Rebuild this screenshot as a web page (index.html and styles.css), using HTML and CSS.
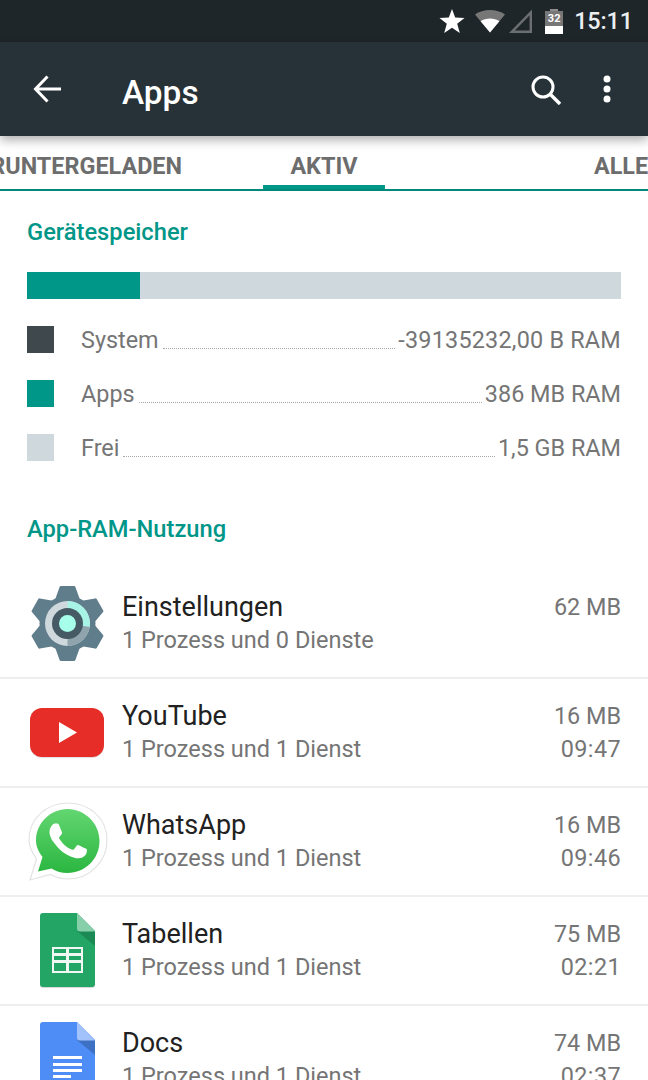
FILE: index.html
```html
<!DOCTYPE html>
<html lang="de">
<head>
<meta charset="utf-8">
<title>Apps</title>
<link rel="stylesheet" href="styles.css">
</head>
<body>
<div class="screen">
  <div class="status">
    <svg class="st-star" width="26" height="24" viewBox="0 0 26 24"><polygon fill="#fff" points="13,0 16.2,8.6 25.5,9 18.2,14.8 20.8,24 13,18.8 5.2,24 7.8,14.8 0.5,9 9.8,8.6"/></svg>
    <svg class="st-wifi" width="30" height="23" viewBox="0 0 30 23"><path fill="#777" d="M15 22.5 0 4.5C4 1.6 9.3 0 15 0s11 1.6 15 4.5z"/><path fill="#fff" d="M15 22.5 5.6 11.2C8.2 9.4 11.5 8.4 15 8.4s6.8 1 9.4 2.8z"/></svg>
    <svg class="st-sig" width="24" height="24" viewBox="0 0 24 24"><path fill="none" stroke="#6b6f72" stroke-width="2.4" d="M21.8 3.4V22.8H2.8z"/></svg>
    <div class="battery"><span class="bat-cap"></span><span class="bat-top">32</span><span class="bat-low"></span></div>
    <span class="clock">15:11</span>
  </div>
  <header class="toolbar">
    <svg class="tb-back" width="28" height="28" viewBox="0 0 28 28"><path fill="none" stroke="#fff" stroke-width="3" d="M28 14H3M14.500 1.500 2.500 14l12 12.500"/></svg>
    <h1 class="tb-title">Apps</h1>
    <svg class="tb-search" width="30" height="30" viewBox="0 0 30 30"><circle cx="12" cy="12" r="10" fill="none" stroke="#fff" stroke-width="3"/><path stroke="#fff" stroke-width="3.400" d="M19 19l10 10"/></svg>
    <svg class="tb-more" width="8" height="28" viewBox="0 0 8 28"><circle cx="4" cy="4" r="3.500" fill="#fff"/><circle cx="4" cy="14" r="3.500" fill="#fff"/><circle cx="4" cy="24" r="3.500" fill="#fff"/></svg>
  </header>
  <nav class="tabs">
    <div class="tab tab-left"><span>HERUNTERGELADEN</span></div>
    <div class="tab tab-active"><span>AKTIV</span></div>
    <div class="tab tab-right"><span>ALLE</span></div>
  </nav>
  <main class="content">
    <section class="storage">
      <h2 class="heading">Gerätespeicher</h2>
      <div class="bar"><div class="bar-fill"></div></div>
      <ul class="legend">
        <li class="leg-row"><span class="swatch sw-system"></span><span class="leg-label">System</span><span class="leader"></span><span class="leg-val leg-val-digits">-39135232,00 B RAM</span></li>
        <li class="leg-row"><span class="swatch sw-apps"></span><span class="leg-label">Apps</span><span class="leader"></span><span class="leg-val">386 MB RAM</span></li>
        <li class="leg-row"><span class="swatch sw-free"></span><span class="leg-label">Frei</span><span class="leader"></span><span class="leg-val">1,5 GB RAM</span></li>
      </ul>
    </section>
    <h2 class="heading heading-apps">App-RAM-Nutzung</h2>
    <ul class="apps">
      <li class="app">
        <svg class="app-icon" width="81" height="81" viewBox="0 0 81 81">
          <g transform="translate(40.500 40.500)">
            <circle r="28" fill="#607d8b"/>
            <path fill="#607d8b" stroke="#607d8b" stroke-width="3" stroke-linejoin="round" d="M-6.500-36H6.500L11.500 -22V22L6.500 36H-6.500L-11.500 22V-22z"/>
            <path fill="#607d8b" stroke="#607d8b" stroke-width="3" stroke-linejoin="round" transform="rotate(60)" d="M-6.500-36H6.500L11.500 -22V22L6.500 36H-6.500L-11.500 22V-22z"/>
            <path fill="#607d8b" stroke="#607d8b" stroke-width="3" stroke-linejoin="round" transform="rotate(120)" d="M-6.500-36H6.500L11.500 -22V22L6.500 36H-6.500L-11.500 22V-22z"/>
            <circle r="22.500" fill="#cfd8dc"/>
            <path fill="#a7f3e6" d="M0 0V-22.500A22.500 22.500 0 0 1 22.200 3.500z"/>
            <path fill="#90a4ae" d="M0 0 22.200 3.500A22.500 22.500 0 0 1 0 22.500z"/>
            <circle r="15.500" fill="#455a64"/>
            <circle r="8.500" fill="#a7ffeb"/>
          </g>
        </svg>
        <div class="app-text"><div class="app-name">Einstellungen</div><div class="app-sub">1 Prozess und 0 Dienste</div></div>
        <div class="app-meta"><div>62 MB</div></div>
      </li>
      <li class="app">
        <svg class="app-icon" width="81" height="81" viewBox="0 0 81 81">
          <rect x="3" y="17" width="74" height="49" rx="12" fill="#e0e0e0"/>
          <rect x="3" y="16" width="74" height="49" rx="12" fill="#e62d27"/>
          <polygon fill="#fff" points="32,30 50,40.500 32,51"/>
        </svg>
        <div class="app-text"><div class="app-name">YouTube</div><div class="app-sub">1 Prozess und 1 Dienst</div></div>
        <div class="app-meta"><div>16 MB</div><div class="app-time">09:47</div></div>
      </li>
      <li class="app">
        <svg class="app-icon" width="81" height="81" viewBox="0 0 81 81">
          <defs><linearGradient id="wa" x1="0" y1="0" x2="0" y2="1"><stop offset="0" stop-color="#63d671"/><stop offset="1" stop-color="#2bb640"/></linearGradient></defs>
          <path fill="#fff" stroke="#e3e3e3" stroke-width="1.200" d="M3 79 9.500 58C4 50 2 44 2 39 2 18 19 2 41 2s39 16 39 37-17 39-39 39c-7 0-12-1.500-17.500-4.500z"/>
          <path fill="url(#wa)" d="M11 70.500 15.500 56C11 50 9 45 9 39.500 9 22 23.500 8 40.500 8S72.500 22 72.500 40 58 72 40.500 72c-6 0-11-1.500-16-4.500z"/>
          <path fill="#fff" transform="translate(3.900 2.600) scale(3.100)" d="M17.472 14.382c-.297-.149-1.758-.867-2.03-.967-.273-.099-.471-.148-.67.15-.197.297-.767.966-.94 1.164-.173.199-.347.223-.644.075-.297-.15-1.255-.463-2.39-1.475-.883-.788-1.48-1.761-1.653-2.059-.173-.297-.018-.458.13-.606.134-.133.298-.347.446-.52.149-.174.198-.298.298-.497.099-.198.05-.371-.025-.52-.075-.149-.669-1.612-.916-2.207-.242-.579-.487-.5-.669-.51-.173-.008-.371-.01-.57-.01-.198 0-.52.074-.792.372-.272.297-1.04 1.016-1.04 2.479 0 1.462 1.065 2.875 1.213 3.074.149.198 2.096 3.2 5.077 4.487.709.306 1.262.489 1.694.625.712.227 1.36.195 1.871.118.571-.085 1.758-.719 2.006-1.413.248-.694.248-1.289.173-1.413-.074-.124-.272-.198-.57-.347z"/>
        </svg>
        <div class="app-text"><div class="app-name">WhatsApp</div><div class="app-sub">1 Prozess und 1 Dienst</div></div>
        <div class="app-meta"><div>16 MB</div><div class="app-time">09:46</div></div>
      </li>
      <li class="app">
        <svg class="app-icon" width="81" height="81" viewBox="0 0 81 81">
          <path fill="#d8d8d8" d="M16 4.500H50L68 22.500V75A3 3 0 0 1 65 78H16a3 3 0 0 1-3-3V7.500a3 3 0 0 1 3-3z"/>
          <path fill="#23a566" d="M16 3H50L68 21V74A3 3 0 0 1 65 77H16a3 3 0 0 1-3-3V6a3 3 0 0 1 3-3z"/>
          <path fill="#1c8a55" d="M50 21H68V36z"/>
          <path fill="#87cfa9" d="M50 3 68 21.500H53a3 3 0 0 1-3-3z"/>
          <path fill="#f1f8f4" fill-rule="evenodd" d="M25 37H56V63H25zM27 39V43H39V39zM42 39V43H54V39zM27 46V50H39V46zM42 46V50H54V46zM27 53V61H39V53zM42 53V61H54V53z"/>
        </svg>
        <div class="app-text"><div class="app-name">Tabellen</div><div class="app-sub">1 Prozess und 1 Dienst</div></div>
        <div class="app-meta"><div>75 MB</div><div class="app-time">02:21</div></div>
      </li>
      <li class="app">
        <svg class="app-icon" width="81" height="81" viewBox="0 0 81 81">
          <path fill="#4e8df5" d="M16 3H50L68 21V74A3 3 0 0 1 65 77H16a3 3 0 0 1-3-3V6a3 3 0 0 1 3-3z"/>
          <path fill="#3e71c4" d="M50 21H68V36z"/>
          <path fill="#a1c2fa" d="M50 3 68 21.500H53a3 3 0 0 1-3-3z"/>
          <path fill="#fff" d="M26 37H55V40H26zM26 44H55V47H26zM26 50H55V53H26zM26 56H44V59H26z"/>
        </svg>
        <div class="app-text"><div class="app-name">Docs</div><div class="app-sub">1 Prozess und 1 Dienst</div></div>
        <div class="app-meta"><div>74 MB</div><div class="app-time">02:37</div></div>
      </li>
    </ul>
  </main>
</div>
</body>
</html>
```
FILE: styles.css
```css
* { box-sizing: border-box; }
html, body { margin: 0; padding: 0; }
body { font-family: Roboto, "Liberation Sans", sans-serif; background: #fff; }
.screen { width: 648px; height: 1080px; overflow: hidden; display: flex; flex-direction: column; }

.status { height: 42px; flex: none; background: #1f262a; display: flex; align-items: center; justify-content: flex-end; padding-right: 15px; }
.st-star { margin-right: 10px; }
.st-wifi { margin-right: 4px; }
.st-sig { margin-right: 12px; }
.battery { width: 18px; height: 25px; display: flex; flex-direction: column; align-items: center; margin-right: 11px; }
.bat-cap { width: 8px; height: 2px; background: #8d8d8d; }
.bat-top { width: 18px; height: 15px; background: #777; color: #fff; font-size: 11px; font-weight: 700; line-height: 15px; text-align: center; }
.bat-low { width: 18px; height: 8px; background: #fff; }
.clock { color: #eceff1; font-size: 23.400px; font-weight: 500; letter-spacing: -0.100px; }

.toolbar { height: 94px; flex: none; background: #263238; display: flex; align-items: center; position: relative; z-index: 1; box-shadow: 0 4px 10px rgba(0, 0, 0, .32); padding-left: 33px; }
.tb-title { margin: 6px 0 0 61px; flex: 1; color: #fff; font-size: 33.400px; font-weight: 500; }
.tb-search { margin-right: 42px; margin-top: 1px; }
.tb-more { margin-right: 37px; margin-top: 0; }

.tabs { height: 55px; flex: none; display: grid; grid-template-columns: 263px 122px 263px; border-bottom: 2px solid #00897b; color: #6d6d6d; font-size: 23.400px; font-weight: 700; overflow: hidden; }
.tab { display: flex; align-items: center; white-space: nowrap; min-width: 0; overflow: hidden; padding-top: 7px; }
.tab-left { justify-content: flex-end; padding-right: 81px; }
.tab-active { justify-content: center; box-shadow: inset 0 -4px 0 #009688; }
.tab-right { padding-left: 209px; }

.content { flex: 1; min-height: 0; overflow: hidden; }
.heading { margin: 0; color: #009688; font-size: 23.700px; font-weight: 500; line-height: 28px; padding-left: 27px; }
.storage { padding: 27px 27px 0 0; }
.bar { margin: 26px 0 0 27px; height: 27px; background: #cfd8dc; }
.bar-fill { width: 113px; height: 100%; background: #009688; }
.legend { list-style: none; margin: 27px 0 0 27px; padding: 0; display: flex; flex-direction: column; gap: 27px; }
.leg-row { display: flex; align-items: center; height: 27px; color: #757575; font-size: 23.400px; }
.swatch { width: 27px; height: 27px; flex: none; margin-right: 27px; }
.sw-system { background: #3f484d; }
.sw-apps { background: #009688; }
.sw-free { background: #cfd8dc; }
.leader { flex: 1; align-self: flex-end; margin: 0 3px 4px 4px; border-bottom: 1px dotted #a8a8a8; }
.leg-val-digits { letter-spacing: 0.220px; }
.heading-apps { margin-top: 54px; }

.apps { list-style: none; margin: 27px 0 0; padding: 0; }
.app { height: 109px; flex: none; display: flex; align-items: center; padding: 0 27px; border-bottom: 2px solid #eeeeee; }
.app-icon { flex: none; margin-right: 14px; }
.app-text { flex: 1; }
.app-name { color: #212121; font-size: 27px; line-height: 32px; }
.app-sub { color: #757575; font-size: 23.500px; line-height: 33px; padding-top: 1px; }
.app-meta { color: #757575; font-size: 23.400px; line-height: 33px; text-align: right; min-height: 66px; }
.app-time { letter-spacing: 0.400px; }
```
